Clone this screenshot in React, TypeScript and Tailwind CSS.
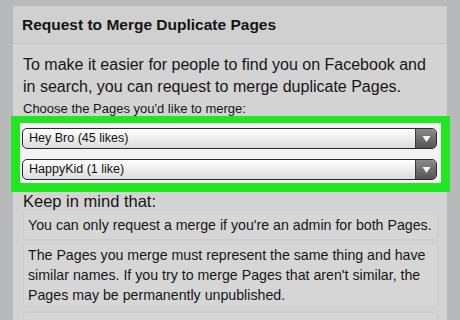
import React from "react";

function Select({ label }: { label: string }) {
  return (
    <div className="flex h-[21px] w-[415px] overflow-hidden rounded-[5px] border border-[#2a2a2a] bg-gradient-to-b from-[#ffffff] to-[#dcdcdc]">
      <div className="flex flex-1 items-center pl-[6px] text-[12.5px] leading-none text-[#111]">{label}</div>
      <div className="flex w-[21px] items-center justify-center border-l border-[#3a3a3a] bg-gradient-to-b from-[#8a8a8a] to-[#555555]">
        <svg width="9" height="8" viewBox="0 0 9 8">
          <path d="M0.5 1 L8.5 1 L4.5 7 Z" fill="#f4f4f4" />
        </svg>
      </div>
    </div>
  );
}

export default function App() {
  return (
    <div
      className="h-[320px] w-[460px] overflow-hidden bg-[#b7b9bb] pl-[13px] pt-[6px]"
      style={{ fontFamily: '"Liberation Sans", Arial, sans-serif' }}
    >
      <div className="h-[314px] w-[434px] rounded-tl-[3px] rounded-tr-[2px] bg-[#d3d3d3] shadow-[0_0_1px_#a9abad]">
        <div className="flex h-[38px] items-center border-b border-[#c3c3c3] bg-[#d0d0d0] pl-[9px] text-[15.5px] font-bold text-[#141414]">
          Request to Merge Duplicate Pages
        </div>
        <div className="pl-[10px] pt-[10px] text-[16px] leading-[22px] text-[#161616]">
          <div>To make it easier for people to find you on Facebook and</div>
          <div>in search, you can request to merge duplicate Pages.</div>
        </div>
        <div className="pl-[10px] text-[13px] leading-[22px] text-[#161616]">Choose the Pages you'd like to merge:</div>
        <div className="ml-[-2px] mt-[-4px] w-[439px] border-[9px] border-t-[7px] border-[#22e622] bg-[#f3f3f3] pb-[3px] pl-[2px] pt-[5px]">
          <div className="flex flex-col gap-[10px]">
            <Select label="Hey Bro (45 likes)" />
            <Select label="HappyKid (1 like)" />
          </div>
        </div>
        <div className="pl-[10px] text-[16.5px] leading-[18px] text-[#161616]">Keep in mind that:</div>
        <div className="flex flex-col gap-[3px] pl-[10px] text-[14.2px] text-[#161616]">
          <div className="w-[415px] whitespace-nowrap rounded-[3px] border border-[#cdcdcd] bg-[#d6d6d6] px-[4px] py-[5px] leading-[18px]">
            You can only request a merge if you're an admin for both Pages.
          </div>
          <div className="w-[415px] whitespace-nowrap rounded-[3px] border border-[#cdcdcd] bg-[#d6d6d6] px-[4px] py-[1px] leading-[20px]">
            <div>The Pages you merge must represent the same thing and have</div>
            <div>similar names. If you try to merge Pages that aren't similar, the</div>
            <div>Pages may be permanently unpublished.</div>
          </div>
          <div className="mt-[2px] h-[20px] w-[415px] rounded-[3px] border border-[#cdcdcd] bg-[#d6d6d6]" />
        </div>
      </div>
    </div>
  );
}
